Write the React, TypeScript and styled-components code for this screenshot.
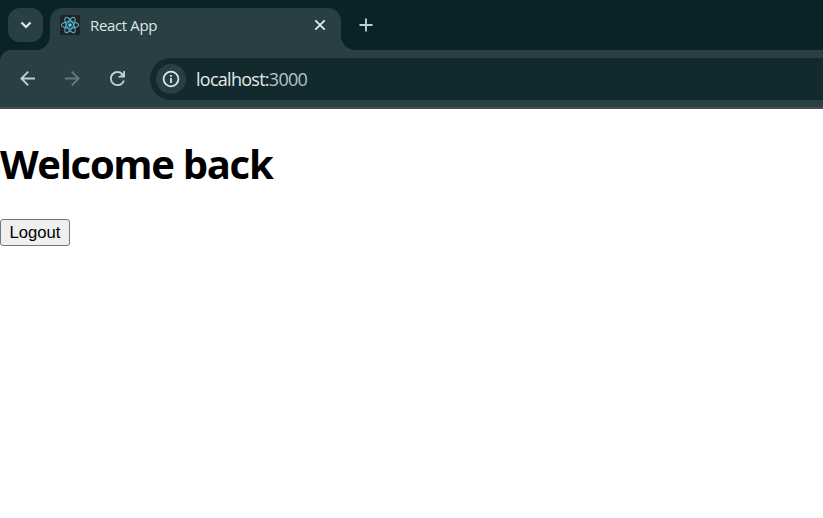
import React from 'react';
import styled, { createGlobalStyle } from 'styled-components';

const frame = '#0a2327';
const surface = '#293f43';
const field = '#12292d';
const pale = '#bad1d3';

const GlobalStyle = createGlobalStyle`
  body { margin: 0; background: #fff; overflow: hidden; }
  * { box-sizing: border-box; }
`;

const Browser = styled.div`
  display: flex;
  flex-direction: column;
  width: 100%;
  height: 100vh;
  font-family: "Open Sans", "Noto Sans", sans-serif;
`;

const TabStrip = styled.header`
  display: flex;
  flex: none;
  height: 50px;
  padding: 8px 0 0 8px;
  background: ${frame};
`;

const ChromeButton = styled.button`
  display: grid;
  place-items: center;
  flex: none;
  padding: 0;
  border: 0;
  background: transparent;
  color: ${pale};
  svg { display: block; }
`;

const TabSearch = styled(ChromeButton)`
  width: 35px;
  height: 34px;
  margin-right: 7px;
  border-radius: 12px;
  background: ${surface};
  color: #e2e9e9;
`;

const Tab = styled.div`
  position: relative;
  display: flex;
  align-items: center;
  width: 291px;
  height: 42px;
  padding: 0 13px 8px 10px;
  border-radius: 13px 13px 0 0;
  background: ${surface};
  &::before, &::after {
    content: "";
    position: absolute;
    bottom: 0;
    width: 14px;
    height: 14px;
  }
  &::before {
    right: 100%;
    background: radial-gradient(circle at 0 0, transparent 13.5px, ${surface} 14.2px);
  }
  &::after {
    left: 100%;
    background: radial-gradient(circle at 100% 0, transparent 13.5px, ${surface} 14.2px);
  }
`;

const Favicon = styled.svg`
  flex: none;
  width: 20px;
  height: 20px;
  margin-right: 10px;
`;

const TabTitle = styled.span`
  flex: 1;
  color: #dfe6e6;
  font-size: 15px;
  line-height: 20px;
  letter-spacing: -0.35px;
  white-space: nowrap;
`;

const CloseTab = styled(ChromeButton)`
  width: 16px;
  height: 16px;
  color: #e2e9e9;
`;

const NewTab = styled(ChromeButton)`
  width: 34px;
  height: 34px;
  margin-left: 8px;
`;

const ToolbarBacking = styled.div`
  flex: none;
  background: ${frame};
`;

const Toolbar = styled.nav`
  display: flex;
  align-items: center;
  height: 59px;
  padding-left: 10px;
  border-bottom: 2px solid #454c4f;
  border-radius: 11px 0 0 0;
  background: ${surface};
`;

const NavButton = styled(ChromeButton)<{ $dim?: boolean }>`
  width: 35px;
  height: 35px;
  margin-right: 10px;
  color: ${({ $dim }) => ($dim ? '#69797c' : pale)};
`;

const AddressBar = styled.div`
  display: flex;
  flex: 1;
  align-items: center;
  height: 42px;
  margin: 1px 0 0 5px;
  padding-left: 6px;
  border-radius: 21px 0 0 21px;
  background: ${field};
`;

const SiteInfo = styled(ChromeButton)`
  width: 30px;
  height: 30px;
  margin-right: 10px;
  border-radius: 50%;
  background: ${surface};
  color: #dce6e6;
`;

const Url = styled.span`
  color: #e2eaea;
  font-size: 18px;
  line-height: 24px;
  letter-spacing: -0.73px;
  white-space: nowrap;
`;

const Port = styled.span`
  color: #b5c5c7;
`;

const Page = styled.main`
  flex: 1;
  padding-top: 27px;
  background: #fff;
  color: #000;
`;

const Heading = styled.h1`
  margin: 0 0 27px;
  font-family: "Open Sans", "Noto Sans", sans-serif;
  font-size: 40px;
  font-weight: 700;
  line-height: 56px;
  letter-spacing: -1.3px;
  white-space: nowrap;
`;

const Logout = styled.button`
  display: block;
  width: 70px;
  height: 27px;
  padding: 0;
  border: 1px solid #767676;
  border-radius: 3px;
  background: #efefef;
  color: #000;
  font: 16.67px/25px "Liberation Sans", Arial, sans-serif;
`;

export default function App() {
  return (
    <>
      <GlobalStyle />
      <Browser>
        <TabStrip>
          <TabSearch aria-label="Search tabs">
            <svg width="12" height="8" viewBox="0 0 12 8" fill="none" stroke="currentColor" strokeWidth="2.2">
              <path d="M1.5 1.5 6 6l4.5-4.5" />
            </svg>
          </TabSearch>
          <Tab>
            <Favicon viewBox="0 0 20 20" fill="none">
              <rect width="20" height="20" rx="2" fill="#202224" />
              <g stroke="#54b3cb" strokeWidth="1.05">
                <ellipse cx="10" cy="10" rx="8.7" ry="3.3" />
                <ellipse cx="10" cy="10" rx="8.7" ry="3.3" transform="rotate(60 10 10)" />
                <ellipse cx="10" cy="10" rx="8.7" ry="3.3" transform="rotate(120 10 10)" />
              </g>
              <circle cx="10" cy="10" r="1.7" fill="#65d6ef" />
            </Favicon>
            <TabTitle>React App</TabTitle>
            <CloseTab aria-label="Close tab">
              <svg width="12" height="12" viewBox="0 0 12 12" fill="none" stroke="currentColor" strokeWidth="1.8">
                <path d="m1.3 1.3 9.4 9.4m0-9.4-9.4 9.4" />
              </svg>
            </CloseTab>
          </Tab>
          <NewTab aria-label="New tab">
            <svg width="14" height="14" viewBox="0 0 14 14" fill="none" stroke="currentColor" strokeWidth="1.9">
              <path d="M7 .5v13M.5 7h13" />
            </svg>
          </NewTab>
        </TabStrip>
        <ToolbarBacking>
          <Toolbar>
            <NavButton aria-label="Back">
              <svg width="15" height="15" viewBox="0 0 15 15" fill="none" stroke="currentColor" strokeWidth="1.9">
                <path d="M15 7.5H1.6M8.2.7 1.4 7.5l6.8 6.8" />
              </svg>
            </NavButton>
            <NavButton aria-label="Forward" $dim>
              <svg width="15" height="15" viewBox="0 0 15 15" fill="none" stroke="currentColor" strokeWidth="1.9">
                <path d="M0 7.5h13.4M6.8.7l6.8 6.8-6.8 6.8" />
              </svg>
            </NavButton>
            <NavButton aria-label="Reload">
              <svg width="15" height="15" viewBox="4 4 16 16" fill="currentColor">
                <path d="M17.65 6.35A7.96 7.96 0 0 0 12 4c-4.42 0-8 3.58-8 8s3.58 8 8 8c3.73 0 6.84-2.55 7.73-6h-2.08A5.99 5.99 0 0 1 12 18c-3.31 0-6-2.69-6-6s2.69-6 6-6c1.66 0 3.14.69 4.22 1.78L14.5 9.2H13V11h7V4h-1.8v1.8z" />
              </svg>
            </NavButton>
            <AddressBar>
              <SiteInfo aria-label="Site information">
                <svg width="18" height="18" viewBox="0 0 18 18" fill="none" stroke="currentColor" strokeWidth="1.8">
                  <circle cx="9" cy="9" r="7.4" />
                  <path d="M9 8v5M9 5v1.8" />
                </svg>
              </SiteInfo>
              <Url>localhost:<Port>3000</Port></Url>
            </AddressBar>
          </Toolbar>
        </ToolbarBacking>
        <Page>
          <Heading>Welcome back</Heading>
          <Logout>Logout</Logout>
        </Page>
      </Browser>
    </>
  );
}
